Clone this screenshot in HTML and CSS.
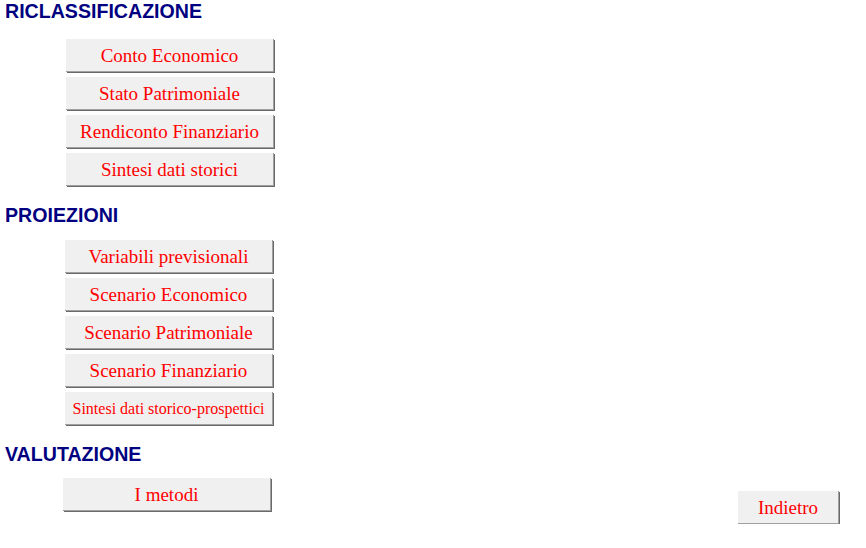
FILE: index.html
```html
<!DOCTYPE html>
<html lang="it">
<head>
    <meta charset="UTF-8">
    <meta name="viewport" content="width=device-width, initial-scale=1.0">
    <title>Menu analisi</title>
    <link rel="stylesheet" href="styles.css">
</head>
<body>
    <div class="menu">
        <div class="section">
            <h2 class="section-title">RICLASSIFICAZIONE</h2>
            <div class="buttons buttons-ricl">
                <button class="menu-btn">Conto Economico</button>
                <button class="menu-btn">Stato Patrimoniale</button>
                <button class="menu-btn">Rendiconto Finanziario</button>
                <button class="menu-btn">Sintesi dati storici</button>
            </div>
        </div>

        <div class="section">
            <h2 class="section-title">PROIEZIONI</h2>
            <div class="buttons buttons-proi">
                <button class="menu-btn">Variabili previsionali</button>
                <button class="menu-btn">Scenario Economico</button>
                <button class="menu-btn">Scenario Patrimoniale</button>
                <button class="menu-btn">Scenario Finanziario</button>
                <button class="menu-btn small">Sintesi dati storico-prospettici</button>
            </div>
        </div>

        <div class="last-row">
            <div class="section">
                <h2 class="section-title">VALUTAZIONE</h2>
                <div class="buttons buttons-val">
                    <button class="menu-btn">I metodi</button>
                </div>
            </div>
            <button class="menu-btn back-btn">Indietro</button>
        </div>
    </div>
</body>
</html>
```

FILE: styles.css
```css
body {
    margin: 0;
    background: white;
    font-family: "Liberation Serif", "Times New Roman", serif;
}

.menu {
    display: flex;
    flex-direction: column;
    padding-left: 5px;
}

.section-title {
    margin: 0;
    height: 22px;
    line-height: 22px;
    font-family: "Liberation Sans", Arial, sans-serif;
    font-size: 19.6px;
    font-weight: bold;
    color: #000080;
}

.buttons {
    display: flex;
    flex-direction: column;
    gap: 5px;
}

.buttons-ricl {
    margin: 17px 0 18px 61px;
}

.buttons-proi {
    margin: 14px 0 18px 60px;
}

.buttons-val {
    margin: 13px 0 0 58px;
}

.menu-btn {
    box-sizing: border-box;
    width: 208px;
    height: 33px;
    margin: 0;
    padding: 0;
    border: none;
    border-right: 1px solid #a0a0a0;
    border-bottom: 1px solid #a0a0a0;
    box-shadow: 1px 1px 0 #696969;
    background: #f0f0f0;
    color: #ff0000;
    font-family: "Liberation Serif", "Times New Roman", serif;
    font-size: 19px;
    line-height: 21px;
    text-align: center;
    cursor: pointer;
}

.menu-btn.small {
    font-size: 16px;
}

.last-row {
    display: flex;
    justify-content: space-between;
    align-items: flex-start;
}

.back-btn {
    width: 101px;
    margin-top: 48px;
    margin-right: 27px;
}
```
